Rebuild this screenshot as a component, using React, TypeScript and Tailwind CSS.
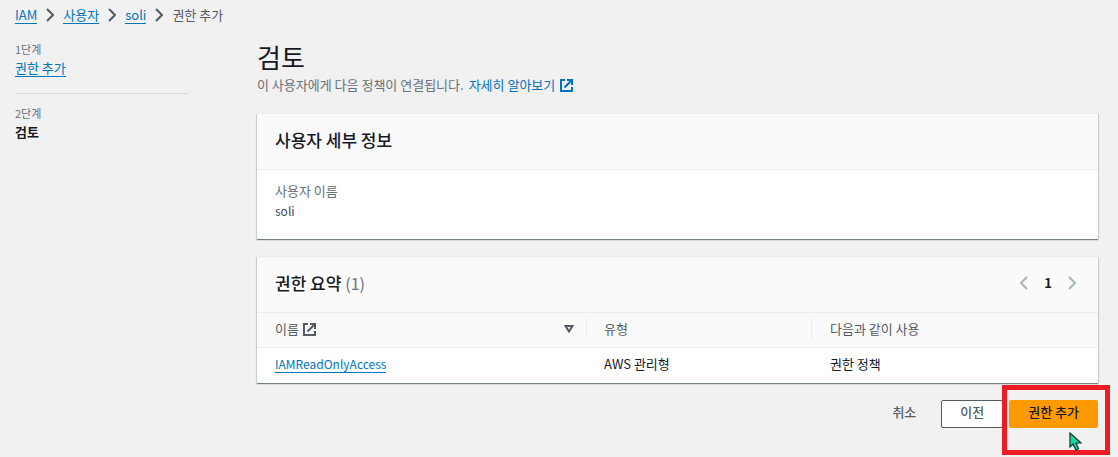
import React from "react";

interface IconProps {
  className?: string;
}

interface Policy {
  name: string;
  type: string;
  usedAs: string;
}

const crumbs = ["IAM", "사용자", "soli"];

const policies: Policy[] = [
  { name: "IAMReadOnlyAccess", type: "AWS 관리형", usedAs: "권한 정책" },
];

const linkClass = "text-[#0073bb] border-b border-[#0073bb] leading-4";

const ChevronRight: React.FC<IconProps> = ({ className }) => (
  <svg viewBox="0 0 8 14" className={className} fill="none" stroke="currentColor" strokeWidth="2">
    <path d="M1 1l6 6-6 6" />
  </svg>
);

const ChevronLeft: React.FC<IconProps> = ({ className }) => (
  <svg viewBox="0 0 8 14" className={className} fill="none" stroke="currentColor" strokeWidth="2">
    <path d="M7 1L1 7l6 6" />
  </svg>
);

const ExternalIcon: React.FC<IconProps> = ({ className }) => (
  <svg viewBox="0 0 13 13" className={className} fill="none" stroke="currentColor" strokeWidth="2">
    <path d="M5 1H1v11h11V8" />
    <path d="M7 1h5v5M12 1L4.500 8.500" />
  </svg>
);

const Cursor: React.FC<IconProps> = ({ className }) => (
  <svg viewBox="0 0 13 19" className={className}>
    <path
      d="M1 1v14l3-3 3 6 2.500-1.200L7 11h5z"
      fill="#12dca4"
      stroke="#10302c"
      strokeWidth="1.200"
    />
  </svg>
);

const Card: React.FC<{ children: React.ReactNode }> = ({ children }) => (
  <section className="bg-white border-t border-t-[#eaeded] shadow-[0_1px_1px_0_rgba(0,28,36,0.4),1px_1px_1px_0_rgba(0,28,36,0.1),-1px_1px_1px_0_rgba(0,28,36,0.1)]">
    {children}
  </section>
);

const App: React.FC = () => {
  return (
    <div className="min-h-screen bg-[#f1f1f1] pl-[15px] pr-5 pt-[5px] pb-7 font-['Noto_Sans_CJK_KR',sans-serif] text-[13px] leading-5 text-[#16191f]">
      <nav aria-label="breadcrumb">
        <ol className="flex items-center text-[#545b64]">
          {crumbs.map((crumb) => (
            <li key={crumb} className="flex items-center">
              <a href="#" className={linkClass}>
                {crumb}
              </a>
              <ChevronRight className="w-2 h-[14px] mx-[9px]" />
            </li>
          ))}
          <li>권한 추가</li>
        </ol>
      </nav>

      <div className="flex mt-[14px]">
        <aside className="w-[173px] shrink-0 mr-[69px]">
          <ol>
            <li className="pb-4 border-b border-[#d5dbdb]">
              <div className="pb-px text-[11px] text-[#687078]">1단계</div>
              <div className="flex">
                <a href="#" className={linkClass}>
                  권한 추가
                </a>
              </div>
            </li>
            <li className="pt-[9px]">
              <div className="pb-px text-[11px] text-[#687078]">2단계</div>
              <div className="font-bold leading-4">검토</div>
            </li>
          </ol>
        </aside>

        <main className="flex-1 min-w-0">
          <h1 className="text-[26px] leading-9">검토</h1>
          <p className="flex items-center mb-[18px] text-[#687078]">
            이 사용자에게 다음 정책이 연결됩니다.
            <a href="#" className="flex items-center ml-[5px] text-[#0073bb]">
              자세히 알아보기
              <ExternalIcon className="w-[13px] h-[13px] ml-[5px]" />
            </a>
          </p>

          <Card>
            <div className="px-[18px] pt-[14px] pb-[17px] bg-[#fafafa] border-b border-[#eaeded]">
              <h2 className="text-[17px] leading-6 font-medium">사용자 세부 정보</h2>
            </div>
            <dl className="px-[18px] pt-[11px] pb-[18px]">
              <dt className="text-[#687078]">사용자 이름</dt>
              <dd className="text-xs leading-5 text-[#414750]">soli</dd>
            </dl>
          </Card>

          <div className="h-[17px]" />

          <Card>
            <div className="flex items-center justify-between px-[18px] pt-[14px] pb-[17px] bg-[#fafafa]">
              <h2 className="text-[17px] leading-6 font-medium">
                권한 요약 <span className="text-base leading-6 font-normal text-[#687078]">(1)</span>
              </h2>
              <div className="flex items-center gap-4 pr-1 text-[#aab7b8]">
                <button aria-label="이전 페이지">
                  <ChevronLeft className="w-2 h-[14px]" />
                </button>
                <span className="font-bold text-[#16191f]">1</span>
                <button aria-label="다음 페이지">
                  <ChevronRight className="w-2 h-[14px]" />
                </button>
              </div>
            </div>
            <table className="w-full table-fixed text-left">
              <thead className="bg-[#fafafa] border-y border-[#eaeded] text-[#545b64]">
                <tr>
                  <th className="w-[330px] pt-[6px] pb-2 font-normal">
                    <div className="flex items-center justify-between pl-[18px] pr-3 border-r border-[#eaeded]">
                      <span className="flex items-center gap-1">
                        이름
                        <ExternalIcon className="w-[13px] h-[13px]" />
                      </span>
                      <svg viewBox="0 0 10 8" className="w-[10px] h-2" fill="none" stroke="currentColor" strokeWidth="2">
                        <path d="M1.500 1h7L5 6.500z" />
                      </svg>
                    </div>
                  </th>
                  <th className="w-[225px] pt-[6px] pb-2 font-normal">
                    <div className="px-[17px] border-r border-[#eaeded]">유형</div>
                  </th>
                  <th className="px-[18px] pt-[6px] pb-2 font-normal">다음과 같이 사용</th>
                </tr>
              </thead>
              <tbody>
                {policies.map((policy) => (
                  <tr key={policy.name}>
                    <td className="px-[18px] pt-[6px] pb-[9px]">
                      <div className="flex text-xs">
                        <a href="#" className={linkClass}>
                          {policy.name}
                        </a>
                      </div>
                    </td>
                    <td className="px-[17px] pt-[6px] pb-[9px]">{policy.type}</td>
                    <td className="px-[18px] pt-[6px] pb-[9px]">{policy.usedAs}</td>
                  </tr>
                ))}
              </tbody>
            </table>
          </Card>

          <div className="flex justify-end mt-[17px] font-medium text-[#545b64]">
            <button className="h-7 px-[25px] pb-1">취소</button>
            <button className="h-7 px-[18px] pb-1 mr-[6px] bg-white border border-[#545b64] rounded-xs">
              이전
            </button>
            <div className="relative">
              <button className="h-7 px-[19px] pb-1 bg-[#ff9900] text-[#16191f] rounded-xs">
                권한 추가
              </button>
              <div className="absolute -left-[7px] -right-3 -top-[15px] -bottom-[27px] border-5 border-[#ed1c24] pointer-events-none" />
              <Cursor className="absolute left-[60px] top-8 w-[13px] h-[19px] pointer-events-none" />
            </div>
          </div>
        </main>
      </div>
    </div>
  );
};

export default App;
